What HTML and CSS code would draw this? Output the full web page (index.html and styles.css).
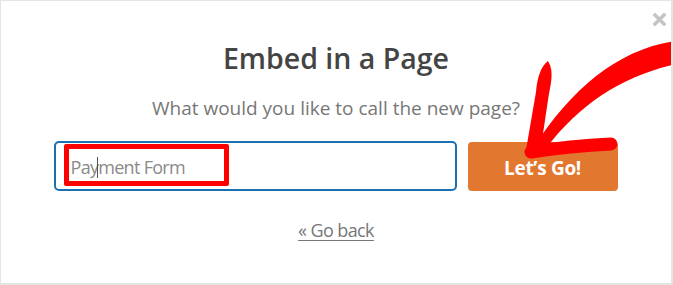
FILE: index.html
```html
<!DOCTYPE html>
<html>
<head>
<meta charset="utf-8">
<link rel="stylesheet" href="styles.css">
</head>
<body>
<div class="modal">
  <button class="close" aria-label="Close">
    <svg width="13" height="13" viewBox="0 0 13 13"><path d="M2 2 L11 11 M11 2 L2 11" stroke="#c4c4c4" stroke-width="3.6" stroke-linecap="square"/></svg>
  </button>
  <h1 class="title">Embed in a Page</h1>
  <p class="subtitle">What would you like to call the new page?</p>
  <div class="row">
    <div class="field">
      <span class="ph">Pay</span><span class="caret"></span><span class="ph">ment Form</span>
      <span class="highlight"></span>
    </div>
    <button class="go">Let’s Go!</button>
  </div>
  <a class="back" href="#">« Go back</a>
  <svg class="arrow" viewBox="0 0 673 285" width="673" height="285">
    <path d="M676 41 C622 48 572 86 532 150 L547 147 C580 104 622 76 676 64 Z" fill="#fe0000"/>
    <path d="M548 61 C541 66 537 78 536 92 L526 150 L541 147 L548 100 C550 86 555 72 548 61 Z" fill="#fe0000"/>
    <path d="M531 152 Q570 146 611 144" stroke="#fe0000" stroke-width="13" stroke-linecap="round" fill="none"/>
  </svg>
</div>
</body>
</html>
```
FILE: styles.css
```css
html, body {
  margin: 0;
  padding: 0;
  background: #fff;
}
.modal {
  position: relative;
  box-sizing: border-box;
  width: 673px;
  height: 285px;
  border: 1px solid #e4e4e4;
  border-right-width: 2px;
  border-bottom-width: 2px;
  display: flex;
  flex-direction: column;
  align-items: center;
  font-family: "Open Sans", "Noto Sans", sans-serif;
  overflow: hidden;
}
.close {
  position: absolute;
  top: 12px;
  right: 5px;
  width: 13px;
  height: 13px;
  padding: 0;
  border: 0;
  background: none;
  display: block;
}
.close svg { display: block; }
.title {
  margin: 40px 0 0;
  font-size: 28.5px;
  line-height: 34px;
  font-weight: 600;
  color: #444;
}
.subtitle {
  margin: 21px 0 0;
  font-size: 19px;
  line-height: 24px;
  color: #777;
}
.row {
  margin-top: 21px;
  display: flex;
  gap: 11px;
  margin-left: -1px;
}
.field {
  position: relative;
  box-sizing: border-box;
  width: 403px;
  height: 50px;
  border: 2px solid #1c6fb0;
  border-radius: 5px;
  display: flex;
  align-items: center;
  padding-left: 15px;
  font-size: 18px;
  letter-spacing: -0.7px;
  padding-top: 2px;
}
.ph { color: #8a8a8a; }
.caret {
  display: inline-block;
  width: 1px;
  height: 21px;
  background: #555;
  margin: 0 0 0 -1px;
}
.highlight {
  position: absolute;
  left: 8px;
  top: 1px;
  width: 165px;
  height: 42px;
  box-sizing: border-box;
  border: 5px solid #fe0000;
  border-radius: 2px;
}
.go {
  box-sizing: border-box;
  width: 150px;
  height: 49px;
  margin-top: 1px;
  border: 0;
  border-radius: 4px;
  background: #e27730;
  color: #fff;
  font-family: "Open Sans", "Noto Sans", sans-serif;
  font-size: 19px;
  font-weight: 700;
  letter-spacing: -0.3px;
  padding: 2px 0 0;
}
.back {
  margin-top: 27px;
  font-size: 18px;
  line-height: 24px;
  color: #777;
  text-decoration: underline;
  text-underline-offset: 3px;
  text-decoration-thickness: 1px;
  letter-spacing: -0.6px;
}
.arrow {
  position: absolute;
  left: -1px;
  top: -1px;
  pointer-events: none;
}
```
